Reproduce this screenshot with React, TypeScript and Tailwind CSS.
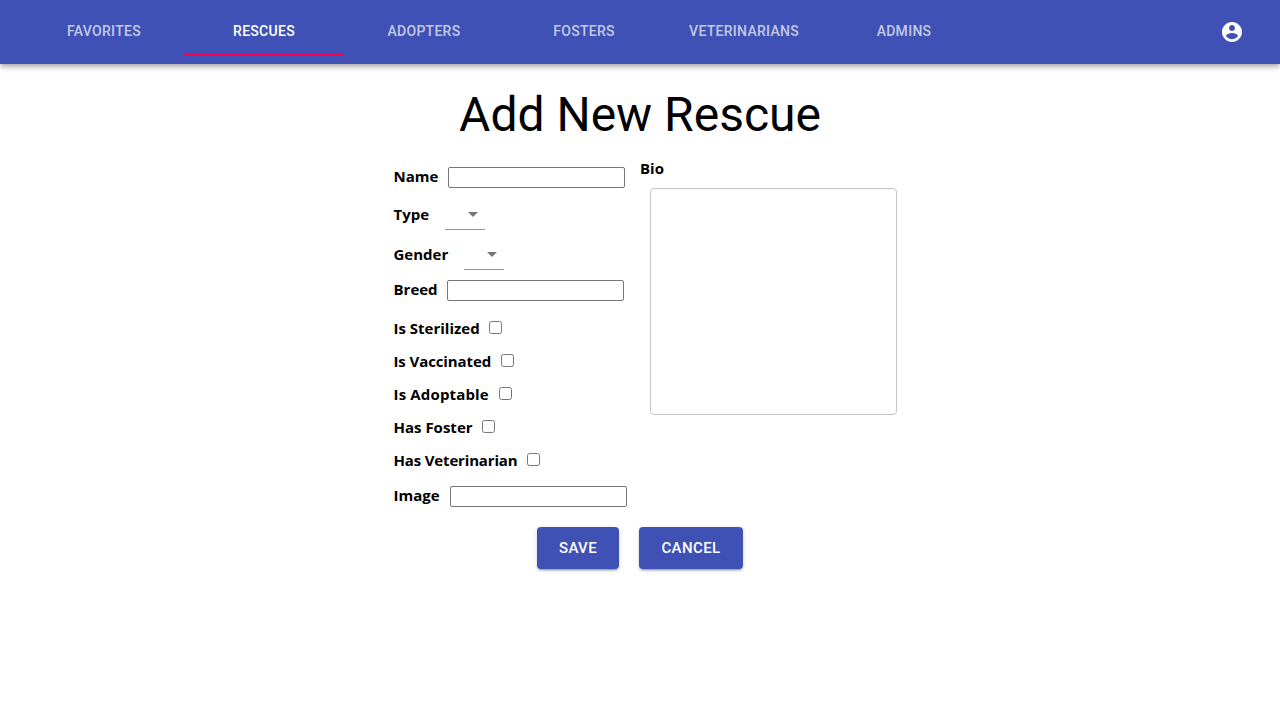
import React from 'react';

const tabs = ['Favorites', 'Rescues', 'Adopters', 'Fosters', 'Veterinarians', 'Admins'];

const labelBase =
  'shrink-0 whitespace-nowrap font-["Open_Sans",sans-serif] text-[15px] leading-5 font-bold text-black';

function TextRow({ label, row, text }: { label: string; row: string; text: string }) {
  return (
    <label className={`flex h-[21px] items-start ${row}`}>
      <span className={`${labelBase} -mt-px pl-[0.5px] ${text}`}>{label}</span>
      <input type="text" className="h-[21px] w-[177px] rounded-[2px] border border-[#767676] bg-white px-0.5 outline-none" />
    </label>
  );
}

function SelectRow({ label, row, text }: { label: string; row: string; text: string }) {
  return (
    <div className={`flex h-8 items-start ${row}`}>
      <span className={`${labelBase} mt-1.5 pl-[0.5px] ${text}`}>{label}</span>
      <div className="flex h-8 w-10 justify-end border-b border-[#949494] pt-1">
        <svg viewBox="0 0 24 24" className="size-6 fill-[#757575]">
          <path d="M7 10l5 5 5-5z" />
        </svg>
      </div>
    </div>
  );
}

function CheckRow({ label, text }: { label: string; text: string }) {
  return (
    <label className="flex h-[33px] items-start">
      <span className={`${labelBase} mt-[7px] pl-[0.5px] ${text}`}>{label}</span>
      <input type="checkbox" className="mt-[10px] size-[13px]" />
    </label>
  );
}

function Button({ children, size }: { children: string; size: string }) {
  return (
    <button
      className={`h-[42px] rounded-[4px] bg-[#3f51b5] text-[15px] font-medium tracking-[0.4px] text-white uppercase shadow-[0_3px_1px_-2px_rgba(0,0,0,0.2),0_2px_2px_0_rgba(0,0,0,0.14),0_1px_5px_0_rgba(0,0,0,0.12)] ${size}`}
    >
      {children}
    </button>
  );
}

export default function App() {
  return (
    <div className="min-h-screen bg-white font-[Roboto,sans-serif]">
      <header className="flex h-16 items-center justify-between bg-[#3f51b5] pr-9 pl-6 shadow-[0_2px_4px_-1px_rgba(0,0,0,0.2),0_4px_5px_0_rgba(0,0,0,0.14),0_1px_10px_0_rgba(0,0,0,0.12)]">
        <nav className="flex h-12">
          {tabs.map((tab) => (
            <button
              key={tab}
              className={`h-12 w-40 border-b-2 text-sm leading-none font-medium tracking-[0.28px] uppercase ${
                tab === 'Rescues' ? 'border-[#f50057] text-white' : 'border-transparent text-white/70'
              }`}
            >
              {tab}
            </button>
          ))}
        </nav>
        <svg viewBox="0 0 24 24" className="size-6 fill-white">
          <path d="M12 2C6.48 2 2 6.48 2 12s4.48 10 10 10 10-4.48 10-10S17.52 2 12 2zm0 3c1.66 0 3 1.34 3 3s-1.34 3-3 3-3-1.34-3-3 1.34-3 3-3zm0 14.200c-2.500 0-4.710-1.280-6-3.220.030-1.990 4-3.080 6-3.080 1.990 0 5.970 1.090 6 3.080-1.290 1.940-3.500 3.220-6 3.220z" />
        </svg>
      </header>

      <main className="flex flex-col items-center pt-[23px]">
        <h1 className="text-5xl leading-[56px] font-normal text-black">Add New Rescue</h1>

        <form className="mt-[15px] flex w-[494px]">
          <div className="flex w-[247px] shrink-0 flex-col pt-[9px]">
            <TextRow label="Name" row="" text="w-[55px]" />
            <SelectRow label="Type" row="mt-[10px]" text="w-[52px]" />
            <SelectRow label="Gender" row="mt-2" text="w-[71px]" />
            <TextRow label="Breed" row="mt-[10px] mb-[10px]" text="w-[54px]" />
            <CheckRow label="Is Sterilized" text="w-[96px]" />
            <CheckRow label="Is Vaccinated" text="w-[108px] tracking-[-0.1px]" />
            <CheckRow label="Is Adoptable" text="w-[106px] tracking-[0.16px]" />
            <CheckRow label="Has Foster" text="w-[89px]" />
            <CheckRow label="Has Veterinarian" text="w-[134px] tracking-[-0.16px]" />
            <TextRow label="Image" row="mt-[10px]" text="w-[57px]" />
          </div>
          <label className="flex shrink-0 flex-col">
            <span className={labelBase}>Bio</span>
            <textarea className="mt-[10px] ml-[10px] h-[227px] w-[247px] resize-none rounded-[4px] border border-[#c4c4c4] p-3 outline-none" />
          </label>
        </form>

        <div className="mt-5 flex gap-5">
          <Button size="w-[82px]">Save</Button>
          <Button size="w-[104px]">Cancel</Button>
        </div>
      </main>
    </div>
  );
}
